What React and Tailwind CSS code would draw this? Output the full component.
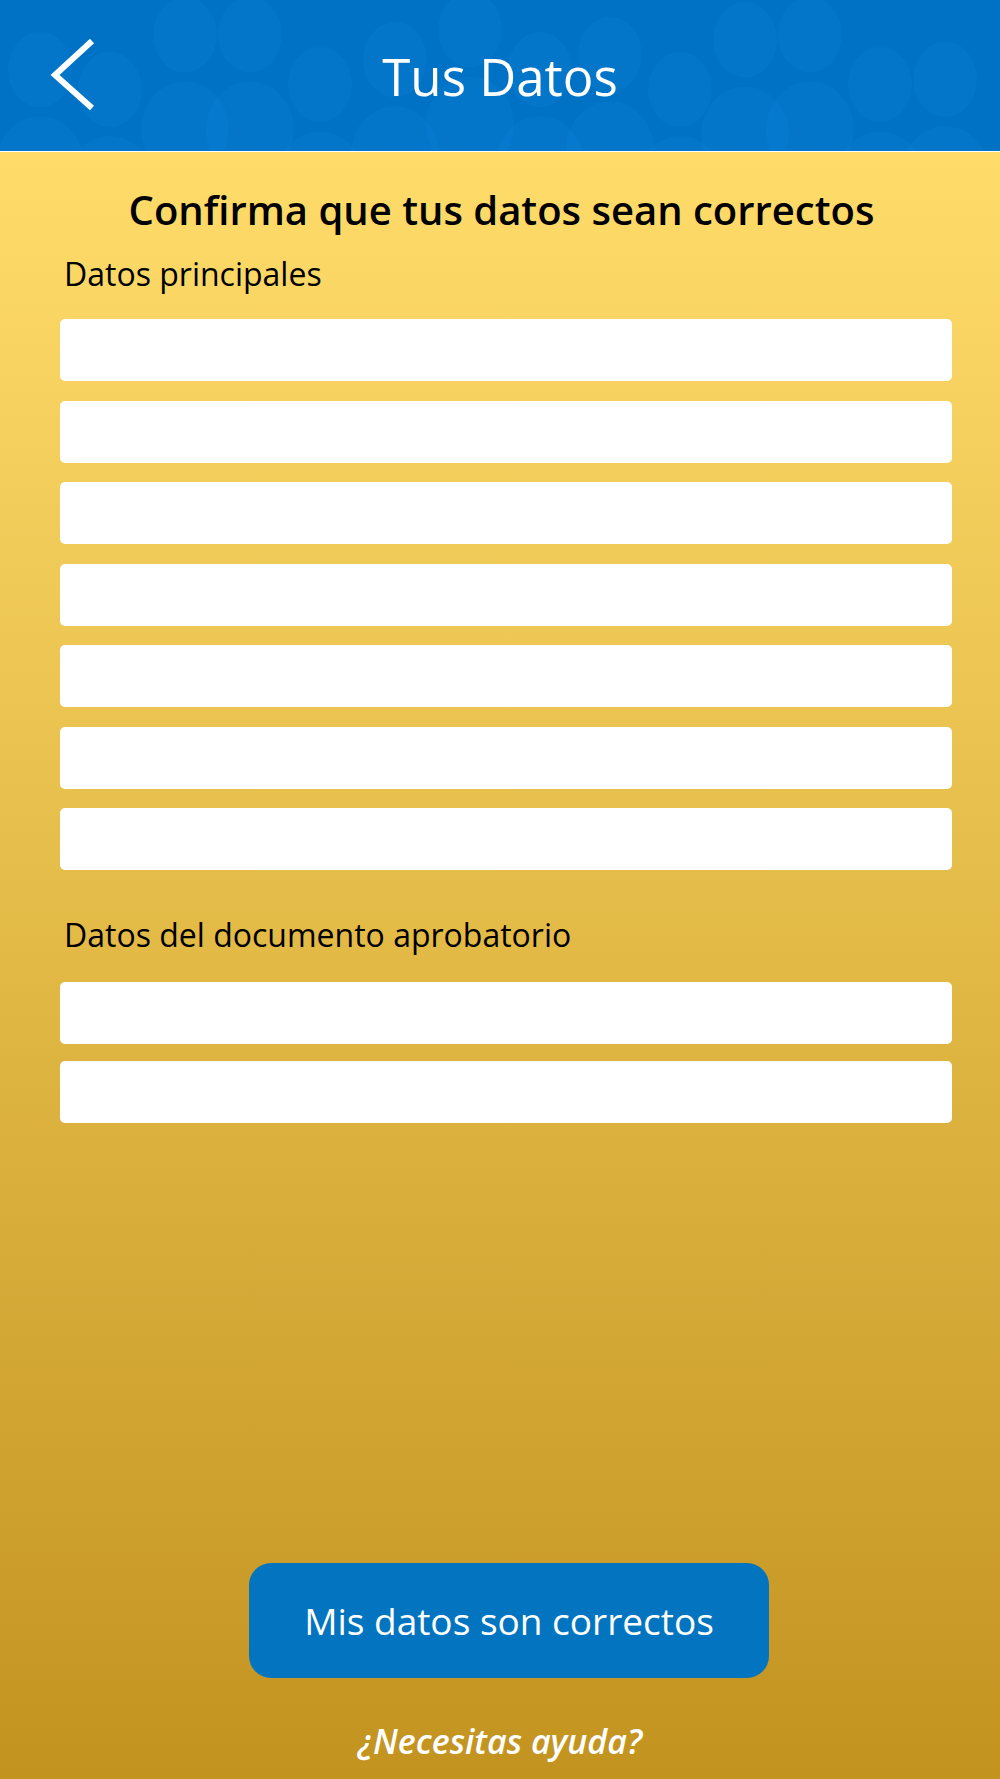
import React from 'react';

const HeaderPattern = () => {
  // faint crowd of heads/shoulders behind the title
  const heads = [
    [40, 70], [110, 90], [185, 35], [250, 35], [320, 85], [395, 60],
    [470, 30], [540, 70], [610, 55], [680, 90], [745, 40], [810, 35],
    [880, 85], [945, 80],
  ];
  return (
    <svg className="absolute inset-0 w-full h-full" viewBox="0 0 1000 152" preserveAspectRatio="none">
      {heads.map(([x, y], i) => (
        <g key={i} fill="#0a80d4" opacity="0.3">
          <ellipse cx={x} cy={y} rx="32" ry="38" />
          <ellipse cx={x} cy={y + 95} rx="44" ry="48" />
        </g>
      ))}
    </svg>
  );
};

const Field = () => <div className="h-[62px] w-[892px] bg-white rounded-[5px]" />;

const App = () => {
  return (
    <div className="w-full min-h-[1779px] flex flex-col" style={{ fontFamily: '"Open Sans", "Noto Sans", sans-serif' }}>
      {/* Header */}
      <header className="relative h-[152px] bg-[#0072c6] border-b border-white overflow-hidden flex items-center justify-center shrink-0">
        <HeaderPattern />
        <button className="absolute left-[48px] top-[38px] w-[50px] h-[74px]">
          <svg width="50" height="74" viewBox="0 0 50 74" fill="none">
            <polyline points="44,3 7,37 44,70" stroke="white" strokeWidth="6" strokeLinejoin="miter" />
          </svg>
        </button>
        <h1 className="relative text-white text-[51px] leading-[60px] font-normal">Tus Datos</h1>
      </header>

      <main className="flex-1 flex flex-col bg-gradient-to-b from-[#ffdc6a] via-[#e2b945] to-[#c3931f] pt-[32px]">
        <h2 className="pl-[3px] text-center text-black text-[40px] leading-[52px] font-semibold">
          Confirma que tus datos sean correctos
        </h2>

        <p className="ml-[64px] mt-[18px] text-[32px] leading-[40px] text-black">Datos principales</p>
        <div className="ml-[60px] mt-[25px] flex flex-col gap-[19.5px]">
          {Array.from({ length: 7 }).map((_, i) => (
            <Field key={i} />
          ))}
        </div>

        <p className="ml-[64px] mt-[45px] text-[32px] leading-[40px] text-black">Datos del documento aprobatorio</p>
        <div className="ml-[60px] mt-[27px] flex flex-col gap-[17px]">
          <Field />
          <Field />
        </div>

        <div className="flex-1" />

        <div className="flex flex-col items-center pb-[18px]">
          <button className="ml-[18px] w-[520px] h-[115px] rounded-[22px] bg-[#0375c0] text-white text-[37px] leading-[48px]">
            Mis datos son correctos
          </button>
          <a className="mt-[43px] text-white italic font-semibold text-[34px] leading-[40px]">¿Necesitas ayuda?</a>
        </div>
      </main>
    </div>
  );
};

export default App;
